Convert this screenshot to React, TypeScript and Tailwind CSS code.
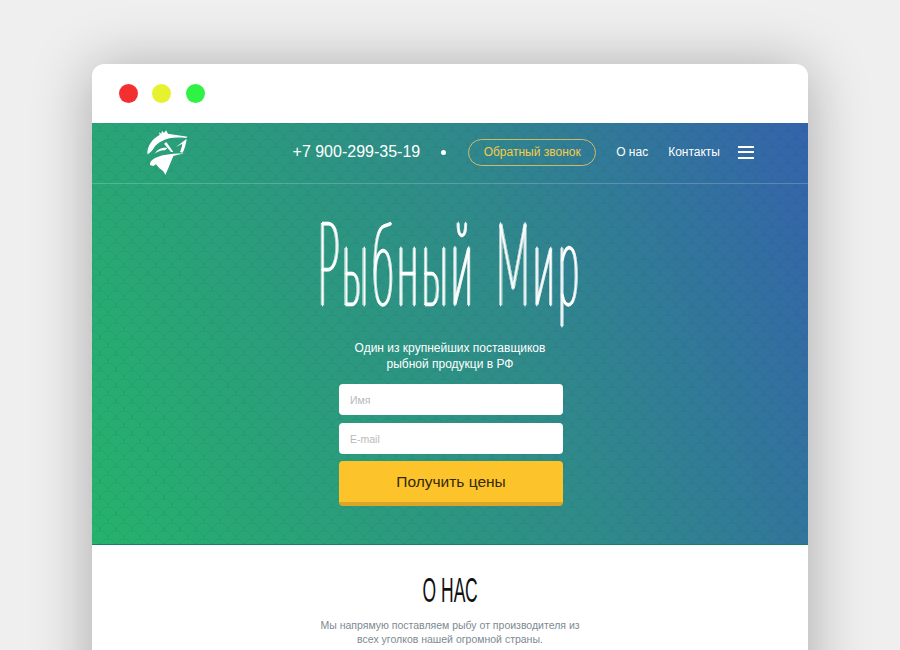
import React from 'react';

const FishLogo: React.FC = () => (
  <svg viewBox="165 215 123 135" className="w-[41px] h-[45px] block" fill="#fff">
    <path d="M166 288 C165 262 182 240 203 230 L201 222 L208 226 L210 217 L216 224 L222 216 L228 226 C246 229 268 232 287 235 L282 239 C264 237 246 237 232 240 C212 245 194 256 186 268 C180 278 174 284 166 288 Z" />
    <path d="M252 266 L284 241 C282 256 278 272 272 283 L264 281 C267 274 270 264 271 256 Z" />
    <path d="M216 256 L223 251 L244 281 L237 281 Z" />
    <path d="M188 286 C196 274 208 266 226 269 L219 276 C208 275 198 279 188 286 Z" />
    <path d="M174 320 C172 308 186 298 212 291 C232 287 256 285 276 285 L244 293 C238 308 230 328 220 350 C216 340 212 336 202 330 L192 318 L184 323 Z" />
  </svg>
);

const ScalePattern: React.FC = () => (
  <svg className="absolute inset-0 w-full h-full" aria-hidden="true">
    <defs>
      <pattern id="fish-scales" width="16" height="16" patternUnits="userSpaceOnUse">
        <path
          d="M0 0 C5 0 8 4 8 8 C8 4 11 0 16 0 M-8 8 C-3 8 0 12 0 16 C0 12 3 8 8 8 C13 8 16 12 16 16 C16 12 19 8 24 8"
          fill="none"
          stroke="#0b4a3c"
          strokeOpacity="0.1"
          strokeWidth="1"
        />
      </pattern>
    </defs>
    <rect width="100%" height="100%" fill="url(#fish-scales)" />
  </svg>
);

export default function App() {
  return (
    <div className="h-[650px] overflow-hidden bg-[#efefef] pt-16 px-[92px] font-['Liberation_Sans',sans-serif]">
      <div className="bg-white rounded-t-xl shadow-[0_4px_60px_rgba(0,0,0,0.3)]">
        {/* Window bar */}
        <div className="h-[59px] flex items-center pl-[27px]">
          <span className="w-[19px] h-[19px] rounded-full bg-[#f42f2f]" />
          <span className="ml-[14px] w-[19px] h-[19px] rounded-full bg-[#e6f22e]" />
          <span className="ml-[15px] w-[19px] h-[19px] rounded-full bg-[#2ff244]" />
        </div>

        {/* Hero */}
        <section className="relative h-[422px] bg-linear-[68deg,#25b36c_0%,#2f8a8a_58%,#3463ac_100%] border-b border-[#1c7f6c] overflow-hidden">
          <ScalePattern />
          <div className="relative flex flex-col items-center">
            <header className="self-stretch h-[61px] pb-[2px] px-[54px] flex items-center justify-between border-b border-white/20 text-white">
              <div className="ml-px">
                <FishLogo />
              </div>
              <nav className="flex items-center">
                <a className="text-base">+7 900-299-35-19</a>
                <span className="ml-[21px] w-[5px] h-[5px] rounded-full bg-white" />
                <button className="ml-[22px] w-[128px] h-[27px] rounded-full border border-[#d1b968] text-xs text-[#f7cb4a]">
                  Обратный звонок
                </button>
                <a className="ml-5 text-xs">О нас</a>
                <a className="ml-5 text-xs">Контакты</a>
                <div className="ml-[18px] w-4 flex flex-col gap-[3.5px]">
                  <span className="h-[2px] bg-white" />
                  <span className="h-[2px] bg-white" />
                  <span className="h-[2px] bg-white" />
                </div>
              </nav>
            </header>

            {/* squeezed wordmark, the shadows widen only the upright strokes */}
            <h1 className="mt-[23px] h-[107px] w-[264px] flex justify-center text-white font-['Lato',sans-serif] font-thin text-[116px] leading-[107px] whitespace-nowrap">
              <span className="scale-x-[0.325] tracking-[12px] [word-spacing:16px] [-webkit-text-stroke:2.5px_#fff] [text-shadow:2px_0_0_#fff,-2px_0_0_#fff,4px_0_0_#fff,-4px_0_0_#fff]">
                Рыбный Мир
              </span>
            </h1>

            <p className="mt-[27px] text-xs leading-[15.5px] text-white text-center">
              Один из крупнейших поставщиков
              <br />
              рыбной продукци в РФ
            </p>

            <form className="mt-[12px] ml-[2px] w-[224px] flex flex-col">
              <input
                placeholder="Имя"
                className="h-[31px] rounded-[4px] bg-white px-[11px] text-[10.5px] placeholder:text-[#b9b9b9] outline-none"
              />
              <input
                placeholder="E-mail"
                className="mt-2 h-[31px] rounded-[4px] bg-white px-[11px] text-[10.5px] placeholder:text-[#b9b9b9] outline-none"
              />
              <button
                type="button"
                className="mt-[7px] h-[45px] rounded-[4px] bg-[#fcc42a] border-b-4 border-[#dca52a] text-[15.5px] text-[#33290f]"
              >
                Получить цены
              </button>
            </form>
          </div>
        </section>

        {/* About */}
        <section className="h-[200px] flex flex-col items-center">
          <h2 className="mt-[27px] h-9 text-[35px] leading-9 text-[#111] font-['Liberation_Sans_Narrow','Liberation_Sans',sans-serif] scale-x-[0.5] whitespace-nowrap">
            О НАС
          </h2>
          <p className="mt-[10px] text-[10.5px] leading-[14px] text-[#7d8a92] text-center">
            Мы напрямую поставляем рыбу от производителя из
            <br />
            всех уголков нашей огромной страны.
          </p>
        </section>
      </div>
    </div>
  );
}
